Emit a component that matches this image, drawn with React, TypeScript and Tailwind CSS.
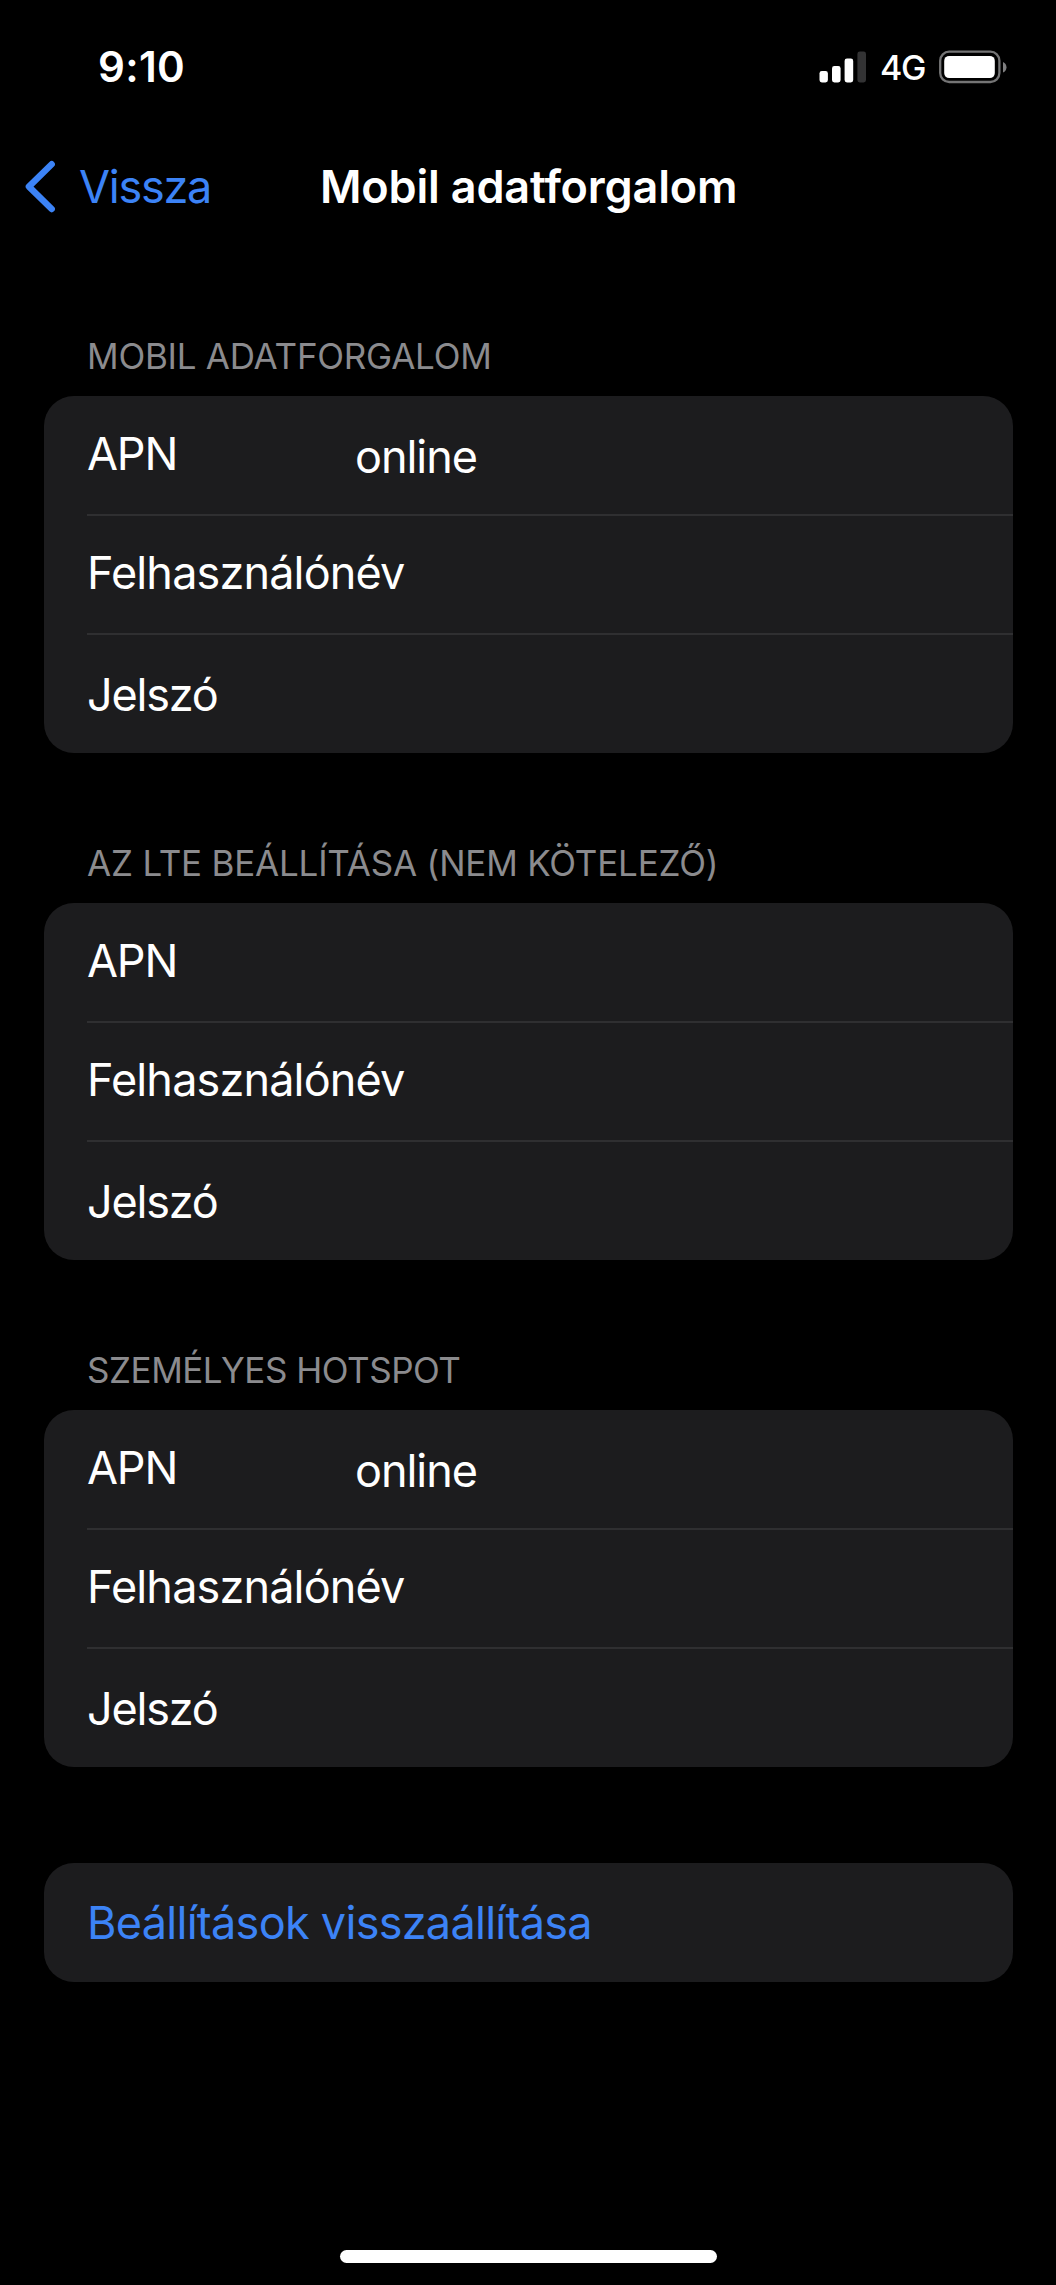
type Row = { label: string; value?: string };
type Section = { title: string; titleTracking: string; rows: Row[] };

const sections: Section[] = [
  {
    title: 'MOBIL ADATFORGALOM',
    titleTracking: 'tracking-[-0.24px]',
    rows: [{ label: 'APN', value: 'online' }, { label: 'Felhasználónév' }, { label: 'Jelszó' }],
  },
  {
    title: 'AZ LTE BEÁLLÍTÁSA (NEM KÖTELEZŐ)',
    titleTracking: 'tracking-[-0.2px]',
    rows: [{ label: 'APN' }, { label: 'Felhasználónév' }, { label: 'Jelszó' }],
  },
  {
    title: 'SZEMÉLYES HOTSPOT',
    titleTracking: 'tracking-[-0.46px]',
    rows: [{ label: 'APN', value: 'online' }, { label: 'Felhasználónév' }, { label: 'Jelszó' }],
  },
];

const rowStyles = [
  'h-[120px] border-b-2 pt-[31px] tracking-[-1.2px]',
  'h-[119px] border-b-2 pt-[30px] tracking-[-0.85px]',
  'h-[118px] pt-[33px] tracking-[-1.2px]',
];

function SignalIcon() {
  return (
    <svg width="48" height="32" viewBox="0 0 48 32" aria-hidden="true">
      <rect x="0.5" y="20" width="8.4" height="11.5" rx="2.4" fill="#fff" />
      <rect x="13" y="15" width="8.6" height="16.5" rx="2.4" fill="#fff" />
      <rect x="25.6" y="7.6" width="8.6" height="23.9" rx="2.4" fill="#fff" />
      <rect x="38.4" y="0.5" width="8.6" height="31" rx="2.4" fill="#333334" />
    </svg>
  );
}

function BatteryIcon() {
  return (
    <svg width="68" height="34" viewBox="0 0 68 34" aria-hidden="true">
      <rect x="1.2" y="1.7" width="59.2" height="30.3" rx="9" fill="none" stroke="#747475" strokeWidth="2.3" />
      <rect x="5.2" y="5.9" width="50.6" height="22.2" rx="5" fill="#fff" />
      <path d="M64 12v10.6c2.2-.9 3.5-3 3.5-5.3S66.2 12.9 64 12Z" fill="#7f7f80" />
    </svg>
  );
}

function StatusBar() {
  return (
    <header className="flex h-[136px] justify-between pr-[49px] pl-[98px]">
      <time className="pt-[42px] text-[42px] leading-[50px] font-semibold tracking-[0.33px]">9:10</time>
      <div className="flex items-start">
        <div className="mt-[51px] mr-[13px]">
          <SignalIcon />
        </div>
        <span className="mt-[48px] w-[59px] text-[34px] leading-[40px] font-medium tracking-[-1.3px]">4G</span>
        <div className="mt-[50px]">
          <BatteryIcon />
        </div>
      </div>
    </header>
  );
}

function NavBar() {
  return (
    <nav className="grid h-[199px] grid-cols-[320px_412px_1fr] items-start">
      <button className="flex items-start text-[#3c83f6]">
        <svg className="mt-[22px] ml-[22px]" width="36" height="58" viewBox="0 0 36 58" fill="none" aria-hidden="true">
          <path d="M29.700 6.200 6.900 28.600 29.700 51" stroke="currentColor" strokeWidth="6.4" strokeLinecap="round" strokeLinejoin="round" />
        </svg>
        <span className="mt-[24px] ml-[21px] text-[45px] leading-[54px] tracking-[-1.26px]">Vissza</span>
      </button>
      <h1 className="mt-[24px] text-[45px] leading-[54px] font-semibold tracking-[-0.18px] whitespace-nowrap">
        Mobil adatforgalom
      </h1>
    </nav>
  );
}

export default function App() {
  return (
    <div className="flex h-[2285px] w-[1056px] flex-col overflow-hidden bg-black font-['Inter',sans-serif] text-white">
      <StatusBar />
      <NavBar />
      <main className="flex flex-1 flex-col px-[43.5px]">
        {sections.map((section) => (
          <section key={section.title} className="h-[507.2px]">
            <h2 className={`mb-[19px] pl-[43.5px] text-[35px] leading-[42px] text-[#8b8b8e] ${section.titleTracking}`}>
              {section.title}
            </h2>
            <div className="rounded-[30px] bg-[#1c1c1e] pl-[43.5px]">
              {section.rows.map((row, i) => (
                <div key={row.label} className={`flex items-start border-[#2f2f31] text-[45px] leading-[54px] ${rowStyles[i]}`}>
                  <span className="w-[268px]">{row.label}</span>
                  {row.value && <span className="mt-[3px] tracking-[-1.05px]">{row.value}</span>}
                </div>
              ))}
            </div>
          </section>
        ))}
        <button className="mt-[6px] h-[119px] rounded-[30px] bg-[#1c1c1e] pt-[2px] pl-[43.5px] text-left text-[45px] leading-[54px] tracking-[-0.71px] text-[#3c83f6]">
          Beállítások visszaállítása
        </button>
      </main>
      <footer className="flex h-[35px] justify-center">
        <div className="h-[13px] w-[377px] rounded-full bg-white" />
      </footer>
    </div>
  );
}
